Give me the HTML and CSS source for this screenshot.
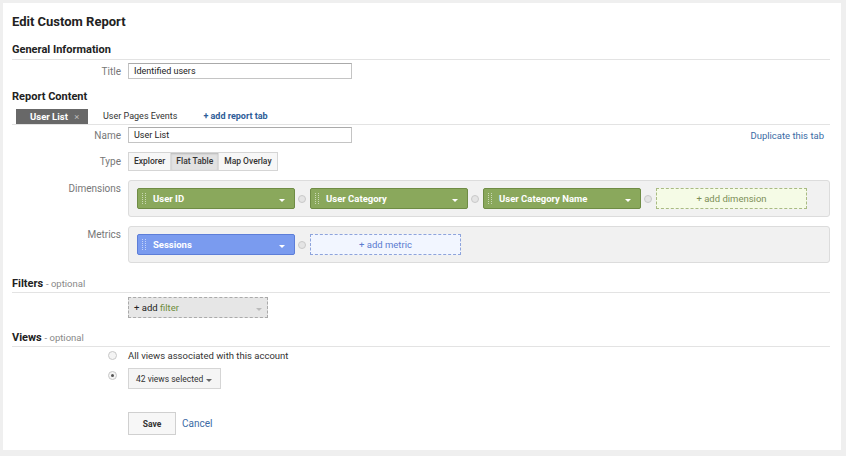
FILE: index.html
```html
<!DOCTYPE html>
<html>
<head>
<meta charset="utf-8">
<link rel="stylesheet" href="styles.css">
</head>
<body>
<div class="card">
  <h1 class="page-title">Edit Custom Report</h1>

  <h2 class="section">General Information</h2>
  <div class="row row-title">
    <label class="lbl">Title</label>
    <div class="input">Identified users</div>
  </div>

  <h2 class="section-plain">Report Content</h2>
  <div class="tabs">
    <div class="tab active">User List <span class="x">×</span></div>
    <div class="tab">User Pages Events</div>
    <div class="tab add">+ add report tab</div>
  </div>

  <div class="row row-name">
    <label class="lbl">Name</label>
    <div class="input">User List</div>
    <a class="dup">Duplicate this tab</a>
  </div>

  <div class="row row-type">
    <label class="lbl">Type</label>
    <div class="seg">
      <span class="seg-btn">Explorer</span>
      <span class="seg-btn on">Flat Table</span>
      <span class="seg-btn">Map Overlay</span>
    </div>
  </div>

  <div class="row row-box">
    <label class="lbl lbl-top">Dimensions</label>
    <div class="box">
      <div class="chip green"><span class="grip"></span><span class="chip-text">User ID</span><span class="caret"></span></div>
      <span class="sep"></span>
      <div class="chip green"><span class="grip"></span><span class="chip-text">User Category</span><span class="caret"></span></div>
      <span class="sep"></span>
      <div class="chip green"><span class="grip"></span><span class="chip-text">User Category Name</span><span class="caret"></span></div>
      <span class="sep"></span>
      <div class="add-chip add-dim">+ add dimension</div>
    </div>
  </div>

  <div class="row row-box row-metrics">
    <label class="lbl lbl-top">Metrics</label>
    <div class="box">
      <div class="chip blue"><span class="grip"></span><span class="chip-text">Sessions</span><span class="caret"></span></div>
      <span class="sep"></span>
      <div class="add-chip add-met">+ add metric</div>
    </div>
  </div>

  <h2 class="section sec-filters">Filters <span class="opt">- optional</span></h2>
  <div class="row row-filter">
    <span class="lbl"></span>
    <div class="filter-box"><span>+ add <em>filter</em></span><span class="caret grey"></span></div>
  </div>

  <h2 class="section sec-views">Views <span class="opt">- optional</span></h2>
  <div class="row row-radio1">
    <span class="lbl"><span class="radio"></span></span>
    <span class="radio-text">All views associated with this account</span>
  </div>
  <div class="row row-radio2">
    <span class="lbl"><span class="radio checked"></span></span>
    <div class="dd"><span class="dd-text">42 views selected</span><span class="caret dark"></span></div>
  </div>

  <div class="row row-save">
    <span class="lbl"></span>
    <button class="save">Save</button>
    <a class="cancel">Cancel</a>
  </div>
</div>
</body>
</html>
```

FILE: styles.css
```css
html, body {
  margin: 0;
  padding: 0;
}
body {
  background: #efefef;
  width: 846px;
  height: 456px;
  overflow: hidden;
  font-family: Roboto, "Liberation Sans", sans-serif;
  color: #333;
}
.card {
  margin: 3px 0 0 3px;
  width: 838px;
  height: 447px;
  background: #fff;
  padding: 0 11px 0 9px;
  box-sizing: border-box;
  overflow: hidden;
}
.page-title {
  margin: 10px 0 0;
  font-size: 13px;
  line-height: 18px;
  font-weight: 700;
  color: #222;
}
.section, .section-plain {
  margin: 12px 0 0;
  font-size: 11px;
  line-height: 14px;
  font-weight: 700;
  color: #222;
}
.section {
  padding-bottom: 2px;
  border-bottom: 1px solid #e3e3e3;
}
.section-plain { margin-top: 11px; }
.opt {
  font-weight: 400;
  color: #888;
  font-size: 9.5px;
}
.row {
  display: flex;
  align-items: center;
}
.lbl {
  flex: 0 0 109px;
  width: 109px;
  margin-right: 7px;
  text-align: right;
  font-size: 10px;
  color: #777;
  display: flex;
  justify-content: flex-end;
  align-items: center;
}
.row-title { margin-top: 3px; }
.input {
  width: 224px;
  height: 16px;
  box-sizing: border-box;
  border: 1px solid #c4c4c4;
  border-top-color: #aaa;
  font-size: 9px;
  line-height: 14px;
  padding-left: 5px;
  color: #222;
}

.tabs {
  margin-top: 5px;
  display: flex;
  align-items: stretch;
  height: 15px;
  border-bottom: 1px solid #e3e3e3;
}
.tab {
  font-size: 9px;
  line-height: 15px;
  color: #333;
}
.tab.active {
  margin-left: 4px;
  width: 72px;
  background: #686868;
  color: #fff;
  font-weight: 700;
  font-size: 9.5px;
  padding-left: 14px;
  box-sizing: border-box;
}
.tab.active .x {
  color: #bbb;
  font-weight: 400;
  margin-left: 4px;
}
.tab:nth-child(2) { margin-left: 15px; }
.tab.add {
  margin-left: 26px;
  color: #2d5d98;
  font-weight: 700;
}

.row-name { margin-top: 2px; }
.dup {
  margin-left: auto;
  margin-right: 6px;
  font-size: 9.5px;
  color: #3b6ba5;
}
.row-type { margin-top: 9px; }
.seg {
  display: flex;
  height: 19px;
  border: 1px solid #d5d5d5;
  box-sizing: border-box;
  background: #f7f7f7;
}
.seg-btn {
  font-size: 8.5px;
  line-height: 17px;
  padding: 0 5px;
  color: #333;
  font-weight: 500;
  border-right: 1px solid #dcdcdc;
}
.seg-btn:last-child { border-right: 0; }
.seg-btn.on {
  background: #e2e2e2;
  box-shadow: inset 0 1px 2px #b8b8b8;
}

.row-box {
  margin-top: 9px;
  align-items: flex-start;
}
.lbl-top { padding-top: 3px; }
.box {
  flex: 1;
  height: 37px;
  box-sizing: border-box;
  border: 1px solid #dcdcdc;
  border-radius: 3px;
  background: #f1f1f1;
  display: flex;
  align-items: center;
  padding-left: 8px;
}
.chip {
  width: 158px;
  height: 21px;
  box-sizing: border-box;
  border-radius: 2px;
  display: flex;
  align-items: center;
  color: #fff;
  font-size: 9.5px;
  font-weight: 700;
}
.chip.green {
  background: #8aa85c;
  border: 1px solid #6f8c45;
}
.chip.blue {
  background: #7a9bef;
  border: 1px solid #5d7ed8;
}
.grip {
  width: 2px;
  height: 11px;
  margin-left: 4px;
  border-left: 1px dotted rgba(255,255,255,0.55);
  border-right: 1px dotted rgba(255,255,255,0.55);
}
.chip-text { margin-left: 7px; }
.caret {
  margin-left: auto;
  margin-right: 9px;
  width: 0;
  height: 0;
  border-left: 3px solid transparent;
  border-right: 3px solid transparent;
  border-top: 3px solid #fff;
  margin-top: 3px;
}
.caret.grey { border-top-color: #bbb; }
.caret.dark { border-top-color: #666; margin-left: 8px; margin-right: 0; }
.sep {
  width: 8px;
  height: 8px;
  box-sizing: border-box;
  border-radius: 50%;
  border: 1.5px solid #c9c9c9;
  background: #e4e4e4;
  margin: 0 4px 0 3px;
}
.add-chip {
  width: 151px;
  height: 21px;
  box-sizing: border-box;
  border: 1px dashed;
  font-size: 9.5px;
  text-align: center;
  line-height: 19px;
}
.add-dim {
  background: #f5fbe6;
  border-color: #a9bb83;
  color: #7c8f58;
}
.add-met {
  background: #f2f6ff;
  border-color: #8ea4dc;
  color: #5b7cd0;
}

.sec-filters { margin-top: 14px; padding-bottom: 1px; }
.row-filter { margin-top: 4px; }
.filter-box {
  width: 140px;
  height: 21px;
  box-sizing: border-box;
  border: 1px dashed #aaa;
  background: #e6e6e6;
  display: flex;
  align-items: center;
  padding-left: 5px;
  font-size: 9.5px;
  color: #222;
}
.filter-box em {
  font-style: normal;
  color: #6d8c3c;
}
.filter-box .caret { margin-right: 5px; }

.sec-views { margin-top: 13px; padding-bottom: 1px; }
.row-radio1 { margin-top: 1px; height: 14px; }
.radio {
  width: 7px;
  height: 7px;
  border-radius: 50%;
  border: 1px solid #c8c8c8;
  background: #f4f4f4;
  margin-right: 4px;
  position: relative;
}
.radio.checked::after {
  content: "";
  position: absolute;
  left: 2px;
  top: 2px;
  width: 3px;
  height: 3px;
  border-radius: 50%;
  background: #555;
}
.row-radio2 .lbl { align-self: flex-start; padding-top: 3px; }
.radio-text {
  font-size: 9.5px;
  color: #333;
}
.row-radio2 { margin-top: 6px; }
.dd {
  height: 21px;
  box-sizing: border-box;
  border: 1px solid #d5d5d5;
  background: #f5f5f5;
  font-size: 8.5px;
  color: #333;
  padding: 0 8px 0 7px;
  display: flex;
  align-items: center;
  width: 93px;
  white-space: nowrap;
}
.dd .caret { margin-left: auto; }
.row-save { margin-top: 23px; }
.save {
  width: 48px;
  height: 23px;
  border: 1px solid #d0d0d0;
  background: #f7f7f7;
  font-family: inherit;
  font-size: 8.5px;
  font-weight: 700;
  color: #333;
  padding: 0;
}
.cancel {
  margin-left: 6px;
  font-size: 10px;
  color: #3b6ba5;
}
```
